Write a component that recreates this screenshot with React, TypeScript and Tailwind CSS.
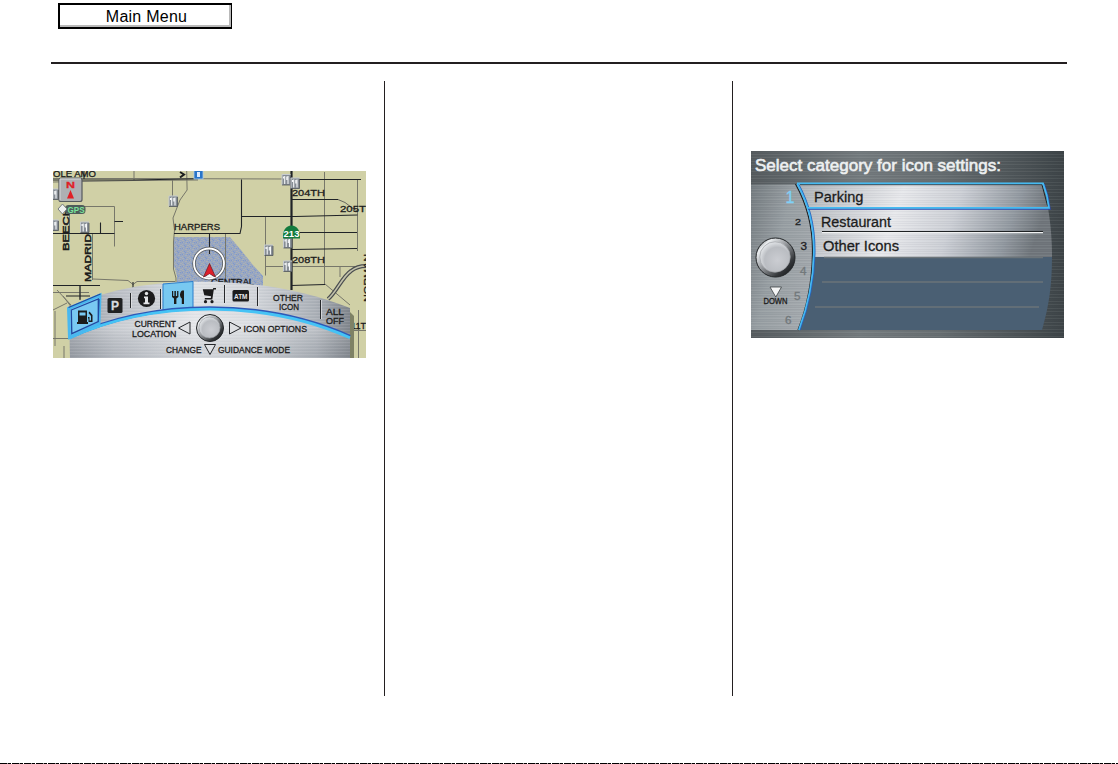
import type { ReactNode } from "react";

const screenFont = '"Liberation Sans", Arial, sans-serif';

function Label({
  x,
  y,
  w,
  size = 9,
  fill = "#1c1c1c",
  weight = 400,
  outline = 0.3,
  transform,
  children,
}: {
  x: number;
  y: number;
  w: number;
  size?: number;
  fill?: string;
  weight?: number;
  outline?: number;
  transform?: string;
  children: string;
}) {
  return (
    <text
      x={x}
      y={y}
      fontSize={size}
      fontWeight={weight}
      fill={fill}
      stroke={fill}
      strokeWidth={outline}
      textLength={w}
      lengthAdjust="spacingAndGlyphs"
      transform={transform}
    >
      {children}
    </text>
  );
}

function Knob({ cx, cy, r, id }: { cx: number; cy: number; r: number; id: string }) {
  return (
    <g>
      <defs>
        <linearGradient id={`${id}-rim`} x1="0" y1="0" x2="1" y2="1">
          <stop offset="0.08" stopColor="#55595d" />
          <stop offset="0.2" stopColor="#eceff1" />
          <stop offset="0.42" stopColor="#a3a6aa" />
          <stop offset="0.75" stopColor="#34373a" />
          <stop offset="1" stopColor="#0c0d0e" />
        </linearGradient>
        <radialGradient id={`${id}-face`} cx="0.58" cy="0.6" r="0.6">
          <stop offset="0" stopColor="#cbcdd2" />
          <stop offset="0.7" stopColor="#babdc2" />
          <stop offset="1" stopColor="#e0e3e6" />
        </radialGradient>
      </defs>
      <circle cx={cx} cy={cy} r={r} fill={`url(#${id}-rim)`} stroke="#222527" strokeWidth="1" />
      <circle cx={cx - 0.5} cy={cy - 0.5} r={r * 0.78} fill={`url(#${id}-face)`} stroke="#a0a4a8" strokeWidth="0.7" />
    </g>
  );
}

// Points of interest drawn on the map
const restaurants = [
  [50, 189],
  [50, 220],
  [80.5, 222],
  [169, 196],
  [282, 174.5],
  [291, 178],
  [264.5, 245],
  [283.5, 237.5],
  [283.5, 261],
];

function RestaurantPin({ x, y }: { x: number; y: number }) {
  return (
    <g transform={`translate(${x} ${y})`}>
      <path d="M0 0h8.5v10.5H0z" fill="#858c93" />
      <path d="M0 10.5V0h8.5" fill="none" stroke="#c6cbd0" />
      <path d="M2.700 1.5v4M2.700 5v4.5M6 1.5v8M4.800 2v3.500M1.500 2v2" fill="none" stroke="#f6f8f9" strokeWidth="1.1" />
      <path d="M8.5 1v9.5H0" fill="none" stroke="#50565c" strokeWidth="0.8" />
    </g>
  );
}

function MapScreen() {
  return (
    <svg viewBox="53 171 313 187" className="block h-[187px] w-[313px]" fontFamily={screenFont}>
      <defs>
        <linearGradient id="console" x1="0" y1="0" x2="1" y2="0">
          <stop offset="0" stopColor="#959aa2" />
          <stop offset="0.16" stopColor="#b9bdc4" />
          <stop offset="0.45" stopColor="#dfe1e5" />
          <stop offset="0.65" stopColor="#d3d6db" />
          <stop offset="0.88" stopColor="#aaafb6" />
          <stop offset="1" stopColor="#7f848b" />
        </linearGradient>
        <linearGradient id="gloss" x1="0" y1="0" x2="0" y2="1">
          <stop offset="0" stopColor="#ffffff" stopOpacity="0.1" />
          <stop offset="0.4" stopColor="#ffffff" stopOpacity="0.25" />
          <stop offset="1" stopColor="#80868e" stopOpacity="0.12" />
        </linearGradient>
        <pattern id="brushed" x="53" width="320" height="6" patternUnits="userSpaceOnUse">
          <path d="M0 .5h320M0 3.5h320" stroke="#ffffff" strokeOpacity="0.1" />
          <path d="M0 2.5h320M0 5.5h320" stroke="#555c66" strokeOpacity="0.04" />
        </pattern>
        <pattern id="water" width="7" height="6" patternUnits="userSpaceOnUse">
          <rect width="7" height="6" fill="#97a6c2" />
          <path d="M0 .5h2M4 1.5h2M1 2.5h1M3 3.5h2M0 4.5h1M5 5.5h2" stroke="#aab0b5" />
          <path d="M3 .5h1M0 2.5h1M5 2.5h1M2 5.5h1" stroke="#7f98cb" />
        </pattern>
      </defs>

      <rect x="53" y="171" width="313" height="187" fill="#d0d0a6" />
      <path d="M174 237h56l11 13 12 15 10 11v14h-86v-14l-3-10z" fill="url(#water)" />

      {/* minor streets */}
      <g fill="none" stroke="#77776a" strokeWidth="1">
        <path d="M53 178.5h80l152 .5M53 182l80-1.5 65-.5" />
        <path d="M172.5 180v17M186.7 171l.4 19-7.1 10-7 18 1.5 12-1 12v27l2.5 9v14" />
        <path d="M83 206.5h31.5v40M69.5 213v20M92.5 233v47M134 171v10" />
        <path d="M324.5 172v112M357.5 179v72M265.5 216.5v59M225.5 234v48" />
        <path d="M93 279l35 1.5 5 4 4-3h38M265 266.5h101M53 292.5h36M63 296l12 16M80 285v14M53 310l14-7M325 284l25 21M340 267v10M350 330.5h16M358.5 310v48M53 338.5h16M55 311v35M64 346v12M57 290l14 15" />
      </g>
      <g fill="none" stroke="#202327" strokeWidth="1.1">
        <path d="M53 180h80l65-1.3M114.5 221.5h8.5M100.5 222.5v11M53 233.5h61.5" />
        <path d="M174 233.5h66l1.5-7v-47M241.5 216.5h54l62-1.5M293 179.5h68M292 199.5h46M292 232.5h65M292 249.5l65-1M291 285.5l34-1" />
        <path d="M53 285.5h47M84 171v8M209.5 234v20M133 282v7M66 296h24M80 285v15" />
        <path d="M291.5 171v119" strokeWidth="2.2" />
      </g>
      <path d="M338 199.5l7 3 8 6 5 3" fill="none" stroke="#66665e" />
      <path d="M328 299c8-6 14-22 23-28 5-4 10-5 15-5" fill="none" stroke="#4b4e50" strokeWidth="4" />
      <path d="M328 299c8-6 14-22 23-28 5-4 10-5 15-5" fill="none" stroke="#c2c2aa" strokeWidth="1.6" />

      <Label x={53} y={176.5} w={43}>OLE AMO</Label>
      <Label x={174} y={230} w={46}>HARPERS</Label>
      <Label x={292} y={196} w={33}>204TH</Label>
      <Label x={340} y={212} w={26}>205T</Label>
      <Label x={292} y={262.5} w={33}>208TH</Label>
      <Label x={351} y={329} w={15}>11T</Label>
      <Label x={211} y={284.5} w={43}>CENTRAL</Label>
      <Label x={0} y={0} w={44} size={9.5} outline={0.5} transform="translate(68.5 251) rotate(-90)">BEECH</Label>
      <Label x={0} y={0} w={48} size={9.5} outline={0.5} transform="translate(91 282) rotate(-90)">MADRID</Label>
      <Label x={0} y={0} w={48} transform="translate(370 302) rotate(-90)">NORMAN</Label>
      <path d="M180 172l4 2.5-4 3" fill="none" stroke="#1b1d1f" strokeWidth="2" />

      {restaurants.map(([x, y]) => (
        <RestaurantPin key={`${x}-${y}`} x={x} y={y} />
      ))}

      <rect x="194" y="170" width="9" height="9" fill="#2874c8" stroke="#adcbe5" strokeWidth="0.8" />
      <path d="M197 172h3v5h-3z" fill="#dbeaff" />

      {/* route shield */}
      <path d="M283 238.5c-.6-8 3-13 8.500-13s9 5 8.500 13z" fill="#147b3e" />
      <Label x={283.5} y={236.5} w={16} fill="#ffffff" weight={700} outline={0}>213</Label>

      {/* north indicator and satellite state */}
      <rect x="59" y="178" width="23" height="23.5" rx="2" fill="#aeb0b3" stroke="#55595e" strokeWidth="1.2" />
      <path d="M60 200.5V179h21" fill="none" stroke="#d6d8da" />
      <Label x={66} y={187.8} w={9} size={9.5} fill="#e01f26" weight={700}>N</Label>
      <path d="M70.5 190l3.5 8.5h-7z" fill="#e01f26" />
      <rect x="65" y="205" width="20.5" height="9" rx="3.5" fill="#4e5c5a" />
      <path d="M62.5 204l4.5 5-4.5 5-4.5-5z" fill="#eef0f0" stroke="#777d80" />
      <Label x={67.5} y={212.7} w={17} fill="#7be39b" weight={700} outline={0}>GPS</Label>

      {/* vehicle position */}
      <circle cx="209" cy="263.5" r="15" fill="none" stroke="#55595d" strokeWidth="3.4" />
      <circle cx="209" cy="263.5" r="15" fill="none" stroke="#ffffff" strokeWidth="1.8" />
      <path d="M209.5 263.5l6 13.5-6-3-6 3z" fill="#dd1f2b" stroke="#742027" strokeWidth="0.8" />
      <path d="M209.5 274l5 3.5h-10z" fill="#f6f6f6" />

      {/* console */}
      <path d="M350 312l4 4v42h-4z" fill="#7e8165" />
      <path d="M69 308C112 286 160 281.5 205 281.7c55 .5 100 9 145 26.3v50H70z" fill="url(#console)" />
      <path d="M69 308C112 286 160 281.5 205 281.7c55 .5 100 9 145 26.3v50H70z" fill="url(#brushed)" />
      <path d="M69 337c41-19 90-29.5 141-29.5 50 0 98 10 140 29.5v21H70z" fill="url(#gloss)" />
      <path d="M163 284l30-2.5V308l-30 3z" fill="#78c8f1" stroke="#2b7ecb" />
      <path d="M69 337.5c41-19 90-29.5 141-29.5 50 0 98 10 140 28.5" fill="none" stroke="#2e58b7" strokeWidth="3.4" />
      <path d="M69 338.2c41-19 90-29 141-29 50 0 98 10 140 28.5" fill="none" stroke="#45c3f5" strokeWidth="2.8" />
      <path d="M68.5 308.5l31.5-13.5-1 28.5-29.5 14z" fill="#79c9f2" stroke="#49b8ef" strokeWidth="3" />
      <path d="M68.5 307.5l32-13.5M99 299l-.8 22.5-27 12.5M71.3 310l27-11v22.5l-26.5 12.2z" fill="none" stroke="#2149a0" strokeWidth="1.3" />
      <path d="M130.5 293v15M160.500 289v20M224.5 285v18M257.5 287v19M320.5 300v19" stroke="#26282b" />
      <path d="M131.500 293v15M161.500 289v20M225.5 285v18M258.5 287v19M321.5 300v19" stroke="#e5e7e9" strokeOpacity="0.7" />

      {/* fuel */}
      <g fill="#1c1c1c">
        <path d="M78 310.5h9V322h1v2H77v-2h1z" />
        <path d="M79.5 312.5h6v3h-6z" fill="#79c9f2" />
        <path d="M88 317h1.5v3.5h1.5V316l-2.5-3 1-1.5 3 3.5v7h-4v-3.5H88z" />
      </g>
      {/* parking */}
      <rect x="107.5" y="298" width="15" height="15" rx="1.5" fill="#202122" />
      <Label x={111} y={309.8} w={8} size={12} fill="#d9dbdf" weight={700}>P</Label>
      {/* information */}
      <circle cx="146.5" cy="298.5" r="8.6" fill="#1b1b1c" />
      <circle cx="146.5" cy="293.5" r="1.7" fill="#e3e4e6" />
      <path d="M144 296.5h4v6h1.5v1.7h-6v-1.7h1.5v-4.3h-1z" fill="#e3e4e6" />
      {/* restaurant */}
      <path d="M172 291h1.2v5h1.2v-5h1.5v5h1.2v-5h1.3v6l-2 1.5v5.5h-2.4v-5.5l-2-1.5zM184 290.5V304h-2.2v-5.5c-2.6-2-2.2-6 .2-8z" fill="#1c1c1c" />
      {/* shopping */}
      <g fill="#1b1b1c">
        <path d="M216 288v1.6h-2.2l-1.5 10h-7.5v-1.5h6l.3-1.8-6.8-1-1.5-6h10.2l.2-1.3z" />
        <circle cx="205.5" cy="301.7" r="1.6" />
        <circle cx="212" cy="301.7" r="1.6" />
      </g>
      {/* cash machine */}
      <rect x="232.5" y="290" width="16.5" height="11.5" rx="1.5" fill="#1b1b1c" />
      <Label x={234} y={298.6} w={13.5} size={7.5} fill="#e5e6e8" weight={700} outline={0}>ATM</Label>

      <Label x={273} y={300.8} w={30}>OTHER</Label>
      <Label x={279} y={310} w={20}>ICON</Label>
      <Label x={326} y={314.5} w={18}>ALL</Label>
      <Label x={326} y={323.5} w={18}>OFF</Label>
      <Label x={134.5} y={327} w={41.5}>CURRENT</Label>
      <Label x={132} y={336.5} w={44.5}>LOCATION</Label>
      <Label x={243.5} y={331.5} w={63.5}>ICON OPTIONS</Label>
      <Label x={166} y={353} w={35.5}>CHANGE</Label>
      <Label x={218} y={353} w={72}>GUIDANCE MODE</Label>
      <g fill="#dfe1e4" stroke="#242629">
        <path d="M178.5 328l11.5-6v12z" />
        <path d="M241 328l-11.5-6v12z" />
        <path d="M204.5 344.5h11l-5.5 10z" />
      </g>
      <Knob cx={210} cy={328} r={13.5} id="map-knob" />
    </svg>
  );
}

const categories = [
  { name: "Parking", x: 814, y: 202, w: 49.5 },
  { name: "Restaurant", x: 821, y: 226.5, w: 70 },
  { name: "Other Icons", x: 823, y: 251, w: 76 },
];

const dial = [
  { n: "1", x: 785.5, y: 203, w: 9, size: 16, fill: "#7fd0f6" },
  { n: "2", x: 795, y: 224.5, w: 6, size: 8.5, fill: "#222426" },
  { n: "3", x: 800.5, y: 249.5, w: 6.5, size: 10, fill: "#1f2123" },
  { n: "4", x: 800, y: 274.5, w: 6.5, size: 10, fill: "#72787b" },
  { n: "5", x: 794, y: 299.5, w: 6.5, size: 10, fill: "#72787b" },
  { n: "6", x: 785, y: 323.5, w: 6.5, size: 10, fill: "#72787b" },
];

function CategoryScreen() {
  return (
    <svg viewBox="751 151 313 187" className="block h-[187px] w-[313px]" fontFamily={screenFont}>
      <defs>
        <linearGradient id="frame" x1="0" y1="0" x2="1" y2="0">
          <stop offset="0" stopColor="#565c5f" />
          <stop offset="0.35" stopColor="#747b7e" />
          <stop offset="0.6" stopColor="#676e71" />
          <stop offset="0.85" stopColor="#4d5457" />
          <stop offset="1" stopColor="#3d4447" />
        </linearGradient>
        <linearGradient id="side" x1="0" y1="0" x2="1" y2="0.6">
          <stop offset="0" stopColor="#757c80" />
          <stop offset="0.5" stopColor="#989fa3" />
          <stop offset="1" stopColor="#a4aaae" />
        </linearGradient>
        <linearGradient id="list" x1="0" y1="0" x2="1" y2="0.1">
          <stop offset="0" stopColor="#aeb3b7" />
          <stop offset="0.2" stopColor="#cbced2" />
          <stop offset="0.42" stopColor="#e8e9ec" />
          <stop offset="0.65" stopColor="#cdd0d6" />
          <stop offset="0.88" stopColor="#939aa1" />
          <stop offset="1" stopColor="#70767b" />
        </linearGradient>
        <pattern id="grain" x="751" width="320" height="7" patternUnits="userSpaceOnUse">
          <path d="M0 .5h320M0 3.5h320" stroke="#ffffff" strokeOpacity="0.06" />
          <path d="M0 1.5h320M0 4.5h320M0 6.5h320" stroke="#202428" strokeOpacity="0.04" />
        </pattern>
      </defs>

      <rect x="751" y="151" width="313" height="187" fill="url(#frame)" />
      <path d="M751 184.5h46c9 18 17 40 17 66 0 29-6 56-15 79.5h-48z" fill="url(#side)" />
      <path d="M797 184h246c5 20 9 44 9 70v3.5H814c0-27-7-53-17-73.5z" fill="url(#list)" />
      <rect x="751" y="151" width="313" height="187" fill="url(#grain)" />
      <path d="M813.5 257H1052c0 28-3 49-10 73H799c9-23 14-47 14.5-73z" fill="#4a5f73" />

      <path d="M824 257.5h219M822 282h221M815 307h224" stroke="#6b7479" strokeWidth="1.7" />
      <path d="M822 231.5h221" stroke="#1f2224" />
      <path d="M822 232.7h221" stroke="#f0f1f2" strokeWidth="1.3" />

      {/* dial edge */}
      <path d="M795.5 184c10 18 17 40 17 66 0 29-5 56-14.5 80" fill="none" stroke="#202326" strokeWidth="1.2" />
      <path d="M798.2 184c10 18 16.5 40 16.5 66 0 29-6 56-15 80" fill="none" stroke="#2765bf" strokeWidth="1.6" />
      <path d="M797.3 184c10 18 16.5 40 16.5 66 0 29-6 56-15 80" fill="none" stroke="#45b8f2" strokeWidth="1.7" />

      {/* selected row */}
      <path d="M800 184.7h242l5.5 21" fill="none" stroke="#202326" />
      <path d="M1044 184c3 8 5 16 6 25H808" fill="none" stroke="#2d4db2" strokeWidth="1.5" />
      <path d="M797 183.3h246c3 8 5 16 6 24.5H808" fill="none" stroke="#45baf1" strokeWidth="1.8" />

      <Label x={755} y={170.5} w={246} size={17} fill="#eef0f1" outline={0.6}>
        Select category for icon settings:
      </Label>
      {categories.map((item) => (
        <Label key={item.name} x={item.x} y={item.y} w={item.w} size={15.5}>
          {item.name}
        </Label>
      ))}
      {dial.map(({ n, ...rest }) => (
        <Label key={n} {...rest}>
          {n}
        </Label>
      ))}

      <Knob cx={775.5} cy={257.5} r={19.5} id="list-knob" />
      <path d="M770 287h11.5l-5.7 10z" fill="#f4f5f5" stroke="#3c4144" strokeWidth="0.8" />
      <Label x={763.5} y={304.3} w={24} size={8.5}>DOWN</Label>
    </svg>
  );
}

function Column({ className, children }: { className: string; children?: ReactNode }) {
  return <section className={`h-[615px] ${className}`}>{children}</section>;
}

export default function App() {
  return (
    <main className="flex h-[764px] w-[1118px] flex-col overflow-hidden bg-white font-['Liberation_Sans',Arial,sans-serif] text-black">
      <header className="mx-[51px] h-16 border-b-2 border-[#231f20] pt-[3px] pl-[7px]">
        <button className="block h-[26px] w-[174px] border-2 border-r border-black bg-white p-0">
          <span className="flex h-full items-center justify-center border-r-2 border-b-2 border-[#b9b9b9] pt-[4px] pl-[4px] text-[16px] leading-none tracking-[0.25px]">
            Main Menu
          </span>
        </button>
      </header>
      <div className="mt-[17px] ml-[51px] flex">
        <Column className="w-[334px] border-r border-[#231f20] pt-[90px] pl-[2px]">
          <MapScreen />
        </Column>
        <Column className="w-[348px] border-r border-[#231f20]" />
        <Column className="w-[334px] pt-[70px] pl-[18px]">
          <CategoryScreen />
        </Column>
      </div>
      <footer className="mt-auto h-px bg-[repeating-linear-gradient(90deg,#000_0_7px,#999_7px_8px,#000_8px_11px,#fff_11px_12px)]" />
    </main>
  );
}
